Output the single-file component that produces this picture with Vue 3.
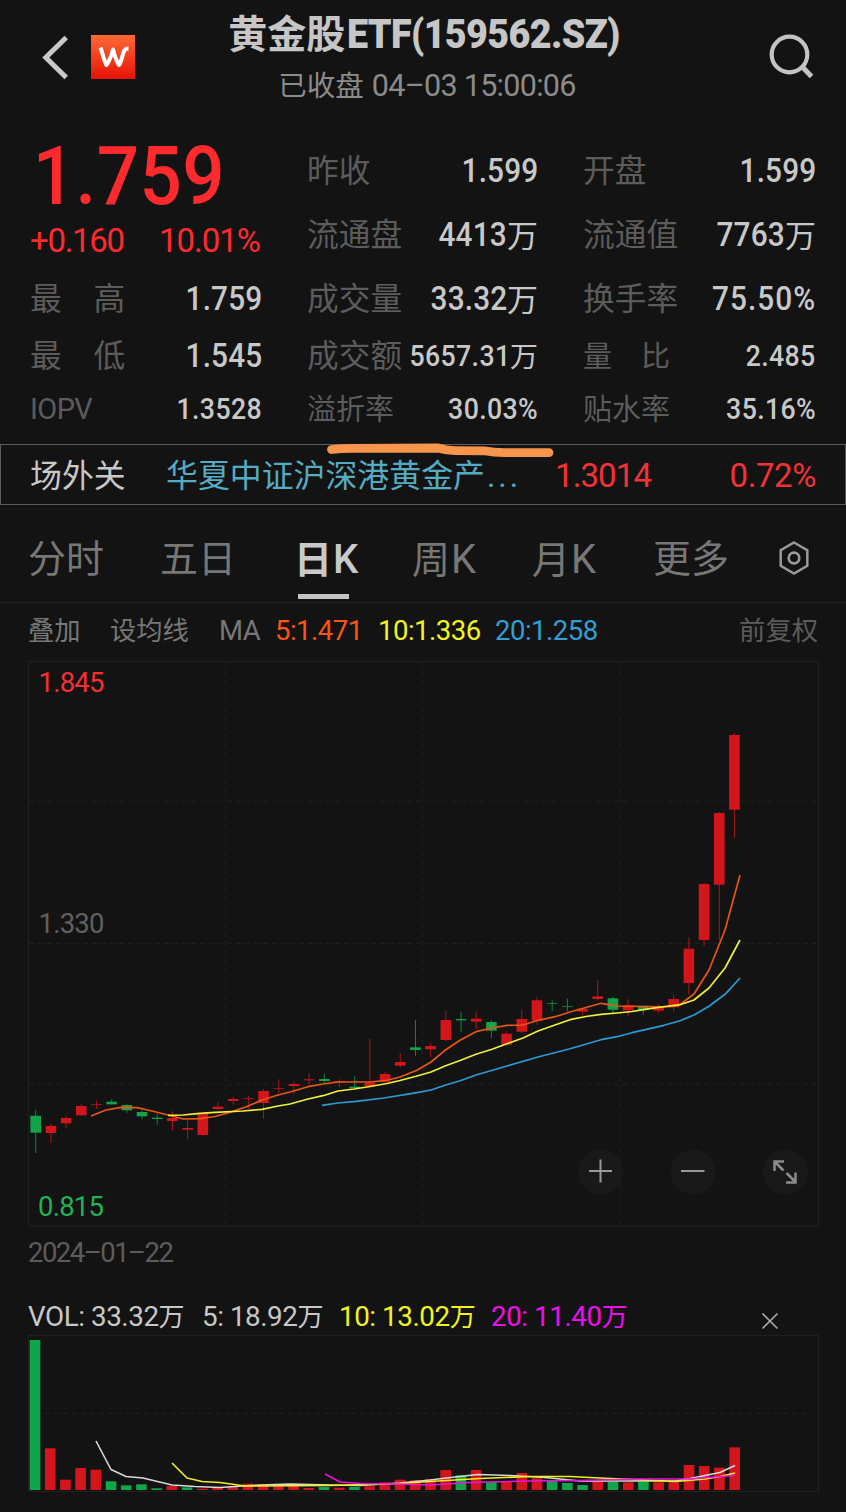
<script setup>
const quotes = [
  { label: '昨收', value: '1.599', col: 2, row: 1 },
  { label: '开盘', value: '1.599', col: 3, row: 1 },
  { label: '流通盘', value: '4413', unit: '万', col: 2, row: 2 },
  { label: '流通值', value: '7763', unit: '万', col: 3, row: 2 },
  { label: '最　高', value: '1.759', col: 1, row: 3 },
  { label: '成交量', value: '33.32', unit: '万', col: 2, row: 3 },
  { label: '换手率', value: '75.50%', col: 3, row: 3, percent: true },
  { label: '最　低', value: '1.545', col: 1, row: 4 },
  { label: '成交额', value: '5657.31', unit: '万', col: 2, row: 4, smallValue: true },
  { label: '量　比', value: '2.485', col: 3, row: 4, small: true, smallValue: true },
  { label: 'IOPV', value: '1.3528', col: 1, row: 5, small: true, smallValue: true, latin: true },
  { label: '溢折率', value: '30.03%', col: 2, row: 5, small: true, smallValue: true, percent: true },
  { label: '贴水率', value: '35.16%', col: 3, row: 5, small: true, smallValue: true, percent: true },
]

const tabs = [
  { cjk: '分时' }, { cjk: '五日' }, { cjk: '日', latin: 'K', active: true },
  { cjk: '周', latin: 'K' }, { cjk: '月', latin: 'K' }, { cjk: '更多' },
]

// direction, body top, body bottom, high, low
const candles = [
  ['g', 1115.7, 1132.7, 1110, 1153], ['r', 1126, 1133, 1124, 1143], ['r', 1118, 1123.3, 1115.7, 1128],
  ['r', 1106, 1115.3, 1103.7, 1116], ['r', 1104.3, 1105, 1100.7, 1109], ['g', 1101.7, 1104.3, 1099.3, 1104.3],
  ['g', 1105, 1110.3, 1104, 1112.7], ['g', 1112, 1116.3, 1110.7, 1119], ['g', 1117.7, 1119, 1114, 1124.7],
  ['r', 1118, 1121, 1111.3, 1130.7], ['r', 1128, 1129.7, 1119.3, 1139.3], ['r', 1113.3, 1135, 1112.7, 1136.3],
  ['r', 1106.7, 1109, 1102.3, 1110], ['r', 1099, 1101, 1097, 1104.7], ['r', 1098, 1098.7, 1096, 1109.3],
  ['r', 1091, 1103, 1089, 1119], ['r', 1088.3, 1089, 1079.3, 1093.3], ['r', 1084, 1086, 1081.7, 1094.3],
  ['r', 1079.3, 1080.3, 1073.7, 1084.3], ['g', 1079, 1081, 1073.7, 1084], ['r', 1081, 1082, 1079.3, 1087.3],
  ['g', 1086.7, 1088, 1076, 1088], ['r', 1082.7, 1086, 1038.7, 1086.7], ['r', 1074, 1081.7, 1071.7, 1082.7],
  ['r', 1062, 1065.7, 1053.3, 1067.3], ['g', 1047.3, 1050, 1020, 1055.7], ['r', 1046, 1049.3, 1042.7, 1057],
  ['r', 1020, 1040, 1010.3, 1041.7], ['g', 1019, 1020.3, 1012, 1032.3], ['r', 1018.7, 1021.7, 1011.3, 1029],
  ['g', 1022, 1030.7, 1020, 1038], ['r', 1033.7, 1044.7, 1031, 1045.3], ['r', 1019, 1031.7, 1009.7, 1033.3],
  ['r', 1000.3, 1020.7, 996.7, 1024.7], ['g', 1003.3, 1004, 1000.3, 1011.3], ['g', 1006.3, 1007, 998.7, 1011.3],
  ['r', 1008.7, 1011.7, 1007.7, 1015.3], ['r', 996.3, 999, 980, 1000.3], ['g', 998.3, 1009.7, 996.7, 1014.3],
  ['r', 1005.3, 1010.3, 999.3, 1016], ['g', 1006.7, 1010, 1005.7, 1015], ['r', 1007.3, 1010.7, 1004, 1013],
  ['r', 999, 1007.3, 994.7, 1011.7], ['r', 948.7, 983, 937.7, 994.7], ['r', 884, 940, 882.7, 946],
  ['r', 813, 884.7, 812, 940], ['r', 735, 809.7, 733.3, 838],
].map(([dir, top, bottom, high, low], i) => ({ dir, top, bottom, high, low, x: 35.7 + i * 15.19 }))

const volumes = [
  ['g', 150], ['r', 41.7], ['r', 10.3], ['r', 22], ['r', 20.3], ['g', 8.7], ['g', 4.7], ['g', 5.7], ['g', 1.7],
  ['r', 4], ['g', 2.7], ['r', 1.3], ['r', 2], ['r', 4], ['r', 6.3], ['r', 6], ['r', 4], ['r', 4.3], ['r', 2],
  ['g', 3], ['r', 2.3], ['g', 3], ['r', 3.7], ['r', 7.7], ['r', 10.3], ['r', 9.7], ['r', 10.7], ['r', 20],
  ['g', 14.7], ['r', 20], ['g', 8], ['r', 8.7], ['r', 17], ['r', 11.7], ['g', 9], ['g', 7], ['g', 5],
  ['r', 8.7], ['g', 8.3], ['r', 7.7], ['g', 8.3], ['r', 7.7], ['r', 8.3], ['r', 25], ['r', 24], ['r', 22.3], ['r', 42.7],
].map(([dir, h], i) => ({ dir, h, x: 35 + i * 15.21 }))

const ma5 = '91,1116 106,1110 121,1107.3 137,1107.7 152,1111 168,1115 183,1119 200,1118.7 215,1116.5 231,1112 247,1106.5 262,1100 278,1095 290,1092 308,1086.7 323,1084 338,1082 370,1082 387,1080.3 400,1077 417,1070.3 431,1062 445,1050.3 460,1040.3 476,1031.7 492,1028 507,1025.3 523,1025 538,1020.3 555,1016.7 570,1012 586,1007.5 601,1003.3 617,1006 650,1006.7 665,1007 678,1006 694,994 709,970 725,930 740,875'
const ma10 = '168,1115.3 183,1115 200,1113.3 215,1112.3 243,1111 262,1109.3 278,1106 290,1104 308,1099 323,1095.7 338,1091 354,1089 370,1086.5 387,1083.5 400,1080.5 417,1076 431,1072 445,1066 460,1060.5 476,1054.3 492,1049.3 507,1043.7 523,1038 538,1031 555,1025 570,1019.7 586,1016.5 601,1014.3 617,1013 632,1011.5 650,1008.7 665,1006.5 680,1004.7 694,1000 709,988 725,968 740,940'
const ma20 = '322,1105.3 338,1103 356,1101.3 384,1098 417,1092.7 431,1090 445,1085.3 460,1080.7 476,1075 507,1066 538,1057 570,1048.7 601,1039.7 617,1036.7 632,1032.7 664,1025.3 680,1020.7 694,1015 709,1006.3 725,994.3 740,978'
const vol5 = '96,1441 111,1469.5 126,1476.5 143,1478 172,1485 195,1486.5 220,1487.5 250,1485.5 290,1484 330,1485 360,1485.5 400,1483 430,1480 455,1477 478,1474.5 510,1475.5 545,1477.5 580,1481 640,1481 675,1481 690,1478.5 705,1475.5 720,1472.5 735,1465.5'
const vol10 = '172,1463 187,1478 202,1481.5 220,1482.5 245,1486 330,1485.5 370,1484.5 400,1483.5 430,1481.5 480,1478.5 530,1476.5 570,1476.5 610,1478.5 645,1480 676,1481.5 705,1479 720,1476.5 735,1473'
const vol20 = '325,1474 340,1482 360,1483.5 400,1484 430,1485 470,1482.5 530,1481 580,1480.5 640,1479 690,1479 720,1476.5 735,1475.5'
</script>

<template>
  <main class="screen">
    <header class="header">
      <div class="left">
        <svg width="30" height="50" viewBox="0 0 30 50"><path d="M25.200 4.500 L4.800 24.500 L25.200 44.500" fill="none" stroke="#c9c9c9" stroke-width="5" /></svg>
        <svg class="logo" width="44" height="44" viewBox="0 0 44 44">
          <defs><linearGradient id="logoFill" x1="0" y1="0" x2="0" y2="1"><stop offset="0" stop-color="#ff6a35" /><stop offset="1" stop-color="#e61207" /></linearGradient></defs>
          <rect width="44" height="44" fill="url(#logoFill)" />
          <path d="M9.500 12.500 C11.500 18 12.500 24 15.500 30 C18.500 26 20.500 20 22 14.500 C23.500 20 25 26 28 30 C31 26 31 20 33 16 C34 14 35.500 13.600 37.500 13.600" fill="none" stroke="#fff" stroke-width="4" stroke-linejoin="round" />
        </svg>
      </div>
      <div class="heading">
        <h1><span>黄金股</span><b>ETF(159562.SZ)</b></h1>
        <p><span>已收盘</span><i>04–03 15:00:06</i></p>
      </div>
      <svg class="search" width="48" height="48" viewBox="0 0 48 48"><circle cx="21.500" cy="21.500" r="17.800" fill="none" stroke="#c4c4c4" stroke-width="4.200" /><path d="M33.500 33 L43.500 43.500" stroke="#c4c4c4" stroke-width="5" /></svg>
    </header>

    <section class="quotes">
      <div class="price">
        <strong>1.759</strong>
        <div class="change"><span>+0.160</span><span>10.01%</span></div>
      </div>
      <div v-for="q in quotes" :key="q.label" class="quote" :class="['c' + q.col, 'r' + q.row, { small: q.small, 'small-value': q.smallValue, percent: q.percent, latin: q.latin }]">
        <span class="label">{{ q.label }}</span>
        <span class="value"><b>{{ q.value }}</b><span v-if="q.unit" class="unit">{{ q.unit }}</span></span>
      </div>
    </section>

    <section class="fund">
      <span class="kind">场外关</span>
      <span class="name">华夏中证沪深港黄金产<i>...</i></span>
      <span class="num">1.3014</span>
      <span class="num pct">0.72%</span>
      <svg class="mark" width="230" height="18" viewBox="325 441 230 18"><path d="M331.500 449.500 Q340 448.300 352 448.300 L438 448 Q446 450.500 455 450.700 L484 450.800 Q494 452.700 504 452.700 L549 452.700" fill="none" stroke="#f7954d" stroke-width="8.800" stroke-linecap="round" stroke-linejoin="round" /></svg>
    </section>

    <nav class="tabs">
      <span v-for="t in tabs" :key="t.cjk" class="tab" :class="{ active: t.active }">{{ t.cjk }}<b v-if="t.latin">{{ t.latin }}</b></span>
      <svg width="34" height="38" viewBox="0 0 34 38"><path d="M17 3.500 L30.300 11.200 V26.800 L17 34.500 L3.700 26.800 V11.200 Z" fill="none" stroke="#999" stroke-width="2.500" /><circle cx="17" cy="19" r="5.300" fill="none" stroke="#999" stroke-width="2.700" /></svg>
    </nav>

    <section class="legend">
      <span>叠加</span><span>设均线</span><span class="lat">MA</span>
      <span class="lat orange">5:1.471</span><span class="lat yellow">10:1.336</span><span class="lat blue">20:1.258</span>
      <span class="adjust">前复权</span>
    </section>

    <svg class="chart" width="846" height="628" viewBox="0 652 846 628">
      <g fill="none" stroke="#202021">
        <rect x="28.500" y="661.500" width="790" height="564.500" />
        <path stroke="#1e1e1f" stroke-dasharray="5 4" d="M225.500 662V1226M422.500 662V1226M620.500 662V1226M29 801.500H818M29 943.500H818M29 1084.500H818" />
      </g>
      <g v-for="(c, i) in candles" :key="i" :class="c.dir">
        <rect :x="c.x - 5.3" :y="c.top" width="10.600" :height="c.bottom - c.top" />
        <rect :x="c.x - 0.5" :y="c.high" width="1" :height="c.low - c.high" opacity="0.8" />
      </g>
      <g fill="none" stroke-width="1.700" stroke-linejoin="round">
        <polyline :points="ma5" stroke="#ea5518" />
        <polyline :points="ma20" stroke="#2a9bd4" />
        <polyline :points="ma10" stroke="#eef03c" />
      </g>
      <g class="axis">
        <text x="38.500" y="692" fill="#f33033" textLength="66">1.845</text>
        <text x="38.500" y="933" fill="#606060" textLength="66">1.330</text>
        <text x="38" y="1216" fill="#22b254" textLength="66">0.815</text>
        <text x="28" y="1262" fill="#5c5c5c" textLength="146">2024–01–22</text>
      </g>
      <g fill="#191919"><circle cx="600.500" cy="1172" r="22.500" /><circle cx="693" cy="1172" r="22.500" /><circle cx="785.500" cy="1172" r="22.500" /></g>
      <g fill="none" stroke="#999" stroke-width="2">
        <path d="M589 1171H612M600.500 1159.500V1182.500M681 1171H704.500" />
        <path stroke-width="2.500" stroke="#8c8c8c" d="M774.500 1171V1161.500H784M775 1162L783.500 1170.500M786.500 1173L795.500 1182M786 1182.500H795.500V1172.500" />
      </g>
    </svg>

    <section class="vol-legend">
      <span>VOL: 33.32<i>万</i></span><span>5: 18.92<i>万</i></span><span class="yellow">10: 13.02<i>万</i></span><span class="magenta">20: 11.40<i>万</i></span>
      <svg width="18" height="18" viewBox="0 0 18 18"><path d="M1.500 1.500L16.500 16.500M16.500 1.500L1.500 16.500" stroke="#aaa" stroke-width="1.600" /></svg>
    </section>
    <svg class="chart" width="846" height="178" viewBox="0 1334 846 178">
      <g fill="none" stroke="#202021"><rect x="28.500" y="1335.500" width="790" height="156" /><path d="M45 1413.500H812" stroke-dasharray="5 4" /></g>
      <rect v-for="(v, i) in volumes" :key="i" :class="v.dir" :x="v.x - 5.3" :y="1490 - v.h" width="10.600" :height="v.h" />
      <g fill="none" stroke-width="1.600" stroke-linejoin="round">
        <polyline :points="vol5" stroke="#d8d8d8" />
        <polyline :points="vol10" stroke="#f0f020" />
        <polyline :points="vol20" stroke="#ea12e2" />
      </g>
    </svg>
  </main>
</template>

<style>
body { background: #131313; }
</style>

<style scoped>
.screen { width: 846px; height: 1512px; overflow: hidden; background: #131313; color: #c8c8c8; font-family: Roboto, "Noto Sans CJK SC", sans-serif; }
i { font-style: normal; }
svg { display: block; }
.header { box-sizing: border-box; height: 139px; display: grid; grid-template-columns: 147px 554px 1fr; }
.left { display: flex; gap: 19px; padding: 33px 0 0 41px; height: 50px; }
.logo { margin: 2px 0 0 1px; }
.heading { text-align: center; }
h1 { margin: 9px 0 0; height: 50px; line-height: 50px; font-size: 39px; font-weight: 700; white-space: nowrap; color: #c6c6c6; }
h1 b { display: inline-block; margin: 0 -24px 0 2px; font-size: 41px; letter-spacing: -0.700px; transform: scaleX(0.92); transform-origin: left; }
.heading p { margin: 6px 0 0; padding-left: 6px; height: 42px; line-height: 42px; font-size: 28.500px; color: #8b8b8b; white-space: nowrap; }
.heading p i { margin-left: 8px; font-size: 30.500px; letter-spacing: -0.700px; }
.search { margin: 33px 0 0 67px; }
.quotes { height: 305px; box-sizing: border-box; padding-left: 30px; display: grid; grid-template-columns: 232px 231px 233px; column-gap: 45px; grid-template-rows: 64px 64px 64px 50px 56px; }
.price { grid-column: 1; grid-row: 1 / 3; color: #fe2a2e; }
.price strong { display: block; width: 232px; height: 76px; line-height: 76px; font-size: 81px; font-weight: 500; letter-spacing: 0.500px; padding-left: 3px; transform: scaleX(0.92); transform-origin: left; }
.change { display: flex; justify-content: space-between; height: 50px; line-height: 51px; font-size: 33px; letter-spacing: -1px; padding-right: 2px; }
.change span:first-child { letter-spacing: -1.300px; }
.quote { display: flex; justify-content: space-between; align-items: center; white-space: nowrap; }
.c1 { grid-column: 1; } .c2 { grid-column: 2; } .c3 { grid-column: 3; }
.r1 { grid-row: 1; } .r2 { grid-row: 2; } .r3 { grid-row: 3; } .r4 { grid-row: 4; } .r5 { grid-row: 5; }
.label { padding-top: 2px; font-size: 31.700px; line-height: 40px; color: #5c5c5c; }
.value { margin-left: -20px; font-size: 33.500px; line-height: 40px; }
.value b { display: inline-block; font-weight: 500; letter-spacing: 0.200px; transform: scaleX(0.89); transform-origin: right; }
.unit { position: relative; top: 1px; font-size: 31px; }
.percent .value b { letter-spacing: 1.200px; }
.percent .value { margin-right: 0; }
.small .label { font-size: 29px; }
.latin .label { letter-spacing: -0.600px; padding-top: 0; }
.small-value .value { font-size: 30px; }
.small-value .value b { letter-spacing: 0.400px; }
.small-value .unit { font-size: 28px; }
.fund { position: relative; box-sizing: border-box; width: 846px; height: 61px; border: 1px solid #5c5c5c; padding: 0 29px; display: grid; grid-template-columns: 136px 389px 120px 1fr; line-height: 62px; font-size: 31.900px; white-space: nowrap; }
.name { color: #56abc4; }
.name i { letter-spacing: 3px; margin-left: 2px; }
.num { color: #f23236; font-size: 33px; line-height: 61px; letter-spacing: -0.900px; }
.pct { text-align: right; letter-spacing: -0.400px; }
.mark { position: absolute; left: 324px; top: -4px; }
.tabs { position: relative; box-sizing: border-box; height: 98px; border-bottom: 1px solid #242424; padding: 24px 0 0 28px; display: grid; grid-template-columns: 132px 134px 118px 120px 121px 124px 1fr; line-height: 61px; font-size: 38px; color: #777; white-space: nowrap; }
.tab b { font-size: 40px; font-weight: 400; margin-left: 1px; }
.tab.active { position: relative; color: #c9c9c9; font-weight: 700; }
.tab.active b { font-weight: 500; }
.tab.active::after { content: ""; position: absolute; left: 4px; top: 65px; width: 51px; height: 5px; background: #c4c4c4; }
.tabs svg { margin-top: 10px; }
.legend { height: 49px; padding: 0 28px; line-height: 57px; font-size: 26.300px; color: #777; display: grid; grid-template-columns: 82px 109px 56px 103px 117px 110px 1fr; white-space: nowrap; }
.lat { font-size: 27.500px; letter-spacing: -0.500px; line-height: 56px; }
.adjust { text-align: right; color: #5c5c5c; }
.orange { color: #f95516; } .yellow { color: #f2f51d; } .blue { color: #319fd6; } .magenta { color: #ee10e8; }
.chart text { font-family: Roboto, sans-serif; font-size: 27.500px; }
.g { fill: #10a54a; } .r { fill: #d3161c; }
.vol-legend { height: 54px; line-height: 74px; padding-left: 28px; display: grid; grid-template-columns: 174px 137px 152px 270px 1fr; font-size: 27.800px; letter-spacing: -0.450px; white-space: nowrap; }
.vol-legend i { font-size: 26px; }
.vol-legend svg { margin-top: 32px; }
</style>
